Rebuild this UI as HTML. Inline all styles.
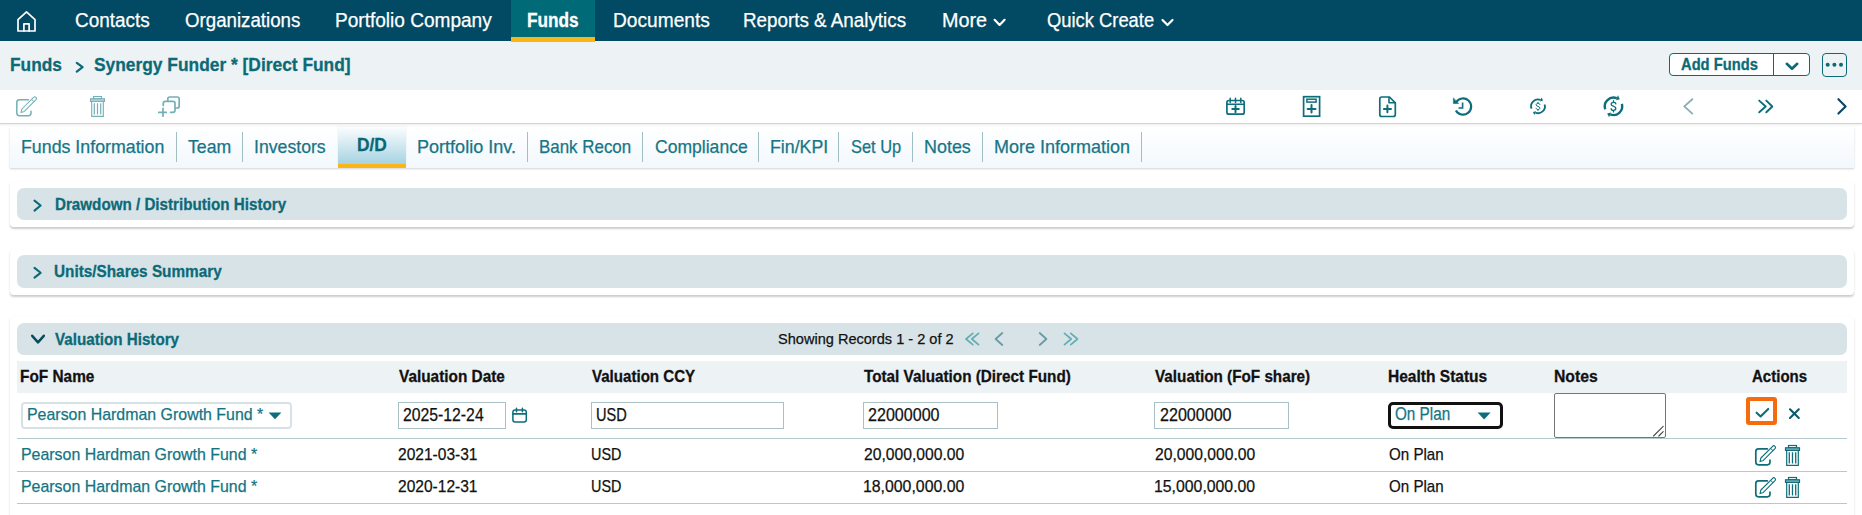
<!DOCTYPE html>
<html><head><meta charset="utf-8"><style>
html,body{margin:0;padding:0;width:1862px;height:515px;overflow:hidden;background:#fff;position:relative}
body{font-family:"Liberation Sans",sans-serif}
.a{position:absolute;box-sizing:border-box}
.t{position:absolute;white-space:nowrap;line-height:20px;transform-origin:0 0;font-family:"Liberation Sans",sans-serif}
svg{position:absolute;overflow:visible}
</style></head><body>
<!-- NAV -->
<div class="a" style="left:0;top:0;width:1862px;height:41px;background:#024a63"></div>
<div class="a" style="left:511px;top:0;width:84px;height:41px;background:#006b77"></div>
<div class="a" style="left:511px;top:37px;width:84px;height:5px;background:#fbb514"></div>
<svg style="left:0;top:0" width="1862" height="41" viewBox="0 0 1862 41">
 <g fill="none" stroke="#fff" stroke-width="1.7" stroke-linejoin="round" stroke-linecap="round">
  <path d="M18,19.6 L26.5,11.8 L35,19.6 V31 H18 Z"/>
  <path d="M23.9,31 V23.9 H29.1 V31"/>
 </g>
 <g fill="none" stroke="#fff" stroke-width="2.2" stroke-linecap="round" stroke-linejoin="round">
  <path d="M994.6,19.8 L999.6,24.9 L1004.6,19.8"/>
  <path d="M1162.5,20 L1167.5,25 L1172.5,20"/>
 </g>
</svg>
<!-- BREADCRUMB -->
<div class="a" style="left:0;top:41px;width:1862px;height:49px;background:#edf2f5"></div>
<div class="a" style="left:511px;top:41px;width:84px;height:1px;background:#fbb514"></div>
<svg style="left:0;top:41px" width="1862" height="49" viewBox="0 41 1862 49">
 <path d="M76.8,62.8 L82.6,67.2 L76.8,71.6" fill="none" stroke="#0c6a77" stroke-width="2.2" stroke-linecap="round" stroke-linejoin="round"/>
</svg>
<div class="a" style="left:1669px;top:53px;width:141px;height:23px;border:1px solid #0c6a77;border-radius:4px;background:#fff"></div>
<div class="a" style="left:1773px;top:53px;width:1px;height:23px;background:#0c6a77"></div>
<div class="a" style="left:1822px;top:53px;width:25px;height:24px;border:1.3px solid #0c6a77;border-radius:4px"></div>
<svg style="left:1660px;top:45px" width="200" height="40" viewBox="1660 45 200 40">
 <path d="M1786.8,63.8 L1792,68.8 L1797.2,63.8" fill="none" stroke="#0c6a77" stroke-width="2.6" stroke-linecap="round" stroke-linejoin="round"/>
 <circle cx="1827.7" cy="64.8" r="2" fill="#0c6a77"/>
 <circle cx="1834.4" cy="64.8" r="2" fill="#0c6a77"/>
 <circle cx="1841" cy="64.8" r="2" fill="#0c6a77"/>
</svg>
<!-- TOOLBAR -->
<div class="a" style="left:0;top:123px;width:1862px;height:1px;background:#d2d5d7;box-shadow:0 1px 2px rgba(0,0,0,0.12)"></div>
<svg style="left:0;top:90px" width="1862" height="33" viewBox="0 90 1862 33">
 <!-- edit disabled -->
 <g fill="none" stroke="#74afb5" stroke-linecap="round" stroke-linejoin="round">
  <path d="M28.4,99.8 H19.5 A2.7,2.7 0 0 0 16.8,102.5 V113.1 A2.7,2.7 0 0 0 19.5,115.8 H28.3 A2.7,2.7 0 0 0 31,113.1 V111.2" stroke-width="1.5"/>
  <path d="M21,112.6 L21.9,109 L33.6,97.3 A1.6,1.6 0 0 1 36,99.7 L24.3,111.4 Z" stroke-width="1.05"/>
  <path d="M31.6,99.3 L34,101.7" stroke-width="1"/>
 </g>
 <!-- trash disabled -->
 <g fill="none" stroke="#74afb5" stroke-width="1.1">
  <rect x="93.5" y="96.5" width="8" height="2.2"/>
  <rect x="90.5" y="98.8" width="14" height="2.6" fill="#b9d6d9"/>
  <path d="M91.7,101.4 V116.4 H103.3 V101.4"/>
  <path d="M94.3,103.2 V114.6 M97.5,103.2 V114.6 M100.7,103.2 V114.6" stroke-width="1.2"/>
 </g>
 <!-- copy plus disabled -->
 <g fill="none" stroke="#74afb5" stroke-width="1.7" stroke-linecap="round">
  <path d="M167.8,101 V99 A2,2 0 0 1 169.8,97 H177.2 A2,2 0 0 1 179.2,99 V106 A2,2 0 0 1 177.2,108 H175.6"/>
  <path d="M163.3,105.4 V103.3 A2,2 0 0 1 165.3,101.3 H173 A2,2 0 0 1 175,103.3 V110.3 A2,2 0 0 1 173,112.3 H170.6"/>
  <path d="M158.8,112.4 H166.3 M163,108.4 V116.2"/>
 </g>
 <!-- right icons -->
 <g fill="none" stroke="#0d6e7b" stroke-linecap="round" stroke-linejoin="round">
  <!-- calendar plus -->
  <rect x="1226.9" y="100.5" width="17.3" height="13.7" rx="2" stroke-width="1.7"/>
  <path d="M1226.9,104.3 H1244.2" stroke-width="1.6"/>
  <path d="M1230.2,98.2 V102.5 M1235.5,98.2 V102.5 M1240.8,98.2 V102.5" stroke-width="1.5"/>
  <path d="M1232.3,109 H1238.8 M1235.5,106 V112.3" stroke-width="2"/>
  <!-- doc header plus -->
  <rect x="1303.6" y="96.7" width="16" height="19.5" stroke-width="1.7" stroke-linejoin="miter"/>
  <rect x="1306.9" y="99.2" width="9.2" height="2.9" stroke-width="1.5" stroke-linejoin="miter"/>
  <path d="M1307.6,109 H1315.5 M1311.5,105 V112.6" stroke-width="2"/>
  <!-- file plus -->
  <path d="M1389.5,97 H1381.8 A2,2 0 0 0 1379.8,99 V114.5 A2,2 0 0 0 1381.8,116.5 H1393.3 A2,2 0 0 0 1395.3,114.5 V102.8 Z" stroke-width="1.7"/>
  <path d="M1389,97.5 V102.7 H1395" stroke-width="1.6"/>
  <path d="M1383.9,109 H1391 M1387.4,105.5 V112.3" stroke-width="2"/>
  <!-- history -->
  <path d="M1456.2,102.2 A8.1,8.1 0 1 1 1455.9,110.4" stroke-width="2.2" stroke-linecap="butt"/>
  <path d="M1453.4,98.2 V103.5 H1458.4 Z" fill="#0d6e7b" stroke-width="0.6"/>
  <path d="M1462.6,102.4 V108 H1458.5" stroke-width="1.6" stroke-linecap="butt" stroke-linejoin="miter"/>
 </g>
 <path d="M1531.52,108.66 A6.9,6.9 0 0 1 1540.58,99.90" fill="none" stroke="#0d6e7b" stroke-width="1.8"/>
 <path d="M1541.53,97.57 L1543.11,100.60 L1539.96,101.46 Z" fill="#0d6e7b"/>
 <path d="M1544.63,104.40 A6.9,6.9 0 0 1 1535.42,112.70" fill="none" stroke="#0d6e7b" stroke-width="1.8"/>
 <path d="M1534.47,115.03 L1532.89,112.00 L1536.04,111.14 Z" fill="#0d6e7b"/>
 <path d="M1539.90,104.54 C1539.90,103.61 1538.84,103.30 1538.00,103.30 C1536.95,103.30 1536.10,103.92 1536.10,104.97 C1536.10,106.40 1539.90,106.28 1539.90,107.95 C1539.90,109.00 1539.05,109.50 1538.00,109.50 C1537.16,109.50 1536.10,109.19 1536.10,108.26 M1538.00,102.30 V103.30 M1538.00,109.50 V110.50" fill="none" stroke="#0d6e7b" stroke-width="1.0" stroke-linecap="round"/>
 <path d="M1605.32,109.28 A8.7,8.7 0 0 1 1616.76,98.23" fill="none" stroke="#0d6e7b" stroke-width="2.4"/>
 <path d="M1617.93,95.34 L1619.84,99.15 L1615.98,100.16 Z" fill="#0d6e7b"/>
 <path d="M1621.86,103.90 A8.7,8.7 0 0 1 1610.24,114.37" fill="none" stroke="#0d6e7b" stroke-width="2.4"/>
 <path d="M1609.07,117.26 L1607.16,113.45 L1611.02,112.44 Z" fill="#0d6e7b"/>
 <path d="M1615.80,103.90 C1615.80,102.70 1614.51,102.30 1613.50,102.30 C1612.23,102.30 1611.20,103.10 1611.20,104.46 C1611.20,106.30 1615.80,106.14 1615.80,108.30 C1615.80,109.66 1614.77,110.30 1613.50,110.30 C1612.49,110.30 1611.20,109.90 1611.20,108.70 M1613.50,100.70 V102.30 M1613.50,110.30 V111.90" fill="none" stroke="#0d6e7b" stroke-width="1.35" stroke-linecap="round"/>
 <!-- nav arrows -->
 <path d="M1692.3,99.2 L1684.3,106.4 L1692.3,113.6" fill="none" stroke="#8caeb6" stroke-width="1.9" stroke-linecap="round" stroke-linejoin="round"/>
 <path d="M1759.2,100.6 L1765.7,106.5 L1759.2,112.3 M1766.3,100.6 L1772.3,106.5 L1766.3,112.3" fill="none" stroke="#0b6e7b" stroke-width="1.9" stroke-linecap="round" stroke-linejoin="round"/>
 <path d="M1838.4,99.2 L1845.6,106.4 L1838.4,113.6" fill="none" stroke="#0b4560" stroke-width="2.1" stroke-linecap="round" stroke-linejoin="round"/>
</svg>
<!-- TABS -->
<div class="a" style="left:10px;top:127px;width:1844px;height:41px;background:linear-gradient(#ffffff,#f2f8fd);box-shadow:0 1px 2px rgba(0,0,0,0.18)"></div>
<div class="a" style="left:338px;top:127px;width:68px;height:37px;background:linear-gradient(#fbfdfe,#a6d3e2);box-shadow:0 0 1px rgba(0,0,0,0.15)"></div>
<div class="a" style="left:338px;top:164px;width:68px;height:4px;background:#fbb514"></div>
<div class="a" style="left:176px;top:132px;width:1px;height:30px;background:#a2bec5"></div>
<div class="a" style="left:242px;top:132px;width:1px;height:30px;background:#a2bec5"></div>
<div class="a" style="left:527px;top:132px;width:1px;height:30px;background:#a2bec5"></div>
<div class="a" style="left:642px;top:132px;width:1px;height:30px;background:#a2bec5"></div>
<div class="a" style="left:758px;top:132px;width:1px;height:30px;background:#a2bec5"></div>
<div class="a" style="left:838px;top:132px;width:1px;height:30px;background:#a2bec5"></div>
<div class="a" style="left:912px;top:132px;width:1px;height:30px;background:#a2bec5"></div>
<div class="a" style="left:982px;top:132px;width:1px;height:30px;background:#a2bec5"></div>
<div class="a" style="left:1141px;top:132px;width:1px;height:30px;background:#a2bec5"></div>
<!-- CARDS -->
<div class="a" style="left:10px;top:182px;width:1844px;height:45px;background:#fff;border-radius:4px;box-shadow:0 1.5px 2px rgba(0,0,0,0.2)"></div>
<div class="a" style="left:17px;top:188px;width:1830px;height:32px;background:#d8e3e8;border-radius:7px"></div>
<div class="a" style="left:10px;top:250px;width:1844px;height:45px;background:#fff;border-radius:4px;box-shadow:0 1.5px 2px rgba(0,0,0,0.2)"></div>
<div class="a" style="left:17px;top:255px;width:1830px;height:33px;background:#d8e3e8;border-radius:7px"></div>
<div class="a" style="left:10px;top:317px;width:1844px;height:260px;background:#fff;border-radius:4px;box-shadow:0 1.5px 2px rgba(0,0,0,0.2)"></div>
<div class="a" style="left:17px;top:323px;width:1830px;height:32px;background:#d8e3e8;border-radius:7px"></div>
<svg style="left:0;top:180px" width="1862" height="180" viewBox="0 180 1862 180">
 <g fill="none" stroke-width="2.1" stroke-linecap="round" stroke-linejoin="round">
  <path d="M34.5,200.6 L40.6,205.5 L34.5,210.6" stroke="#0c6a77"/>
  <path d="M34.5,267.9 L40.6,272.8 L34.5,277.6" stroke="#0c6a77"/>
  <path d="M32.2,335.8 L38,342.4 L43.8,335.8" stroke="#0b4a5e" stroke-width="2.5"/>
 </g>
 <g fill="none" stroke-width="1.5" stroke-linecap="round" stroke-linejoin="round">
  <path d="M972.8,333.4 L966,339 L972.8,344.6 M978.5,333.4 L971.8,339 L978.5,344.6" stroke="#62adb2" stroke-width="1.7"/>
  <path d="M1002.3,333 L995.6,339 L1002.3,345" stroke="#6a9aa6" stroke-width="1.8"/>
  <path d="M1039.7,333 L1046.4,339 L1039.7,345" stroke="#6a9aa6" stroke-width="1.8"/>
  <path d="M1064.5,333.4 L1071.2,339 L1064.5,344.6 M1070.8,333.4 L1077.5,339 L1070.8,344.6" stroke="#62adb2" stroke-width="1.7"/>
 </g>
</svg>
<!-- TABLE -->
<div class="a" style="left:17px;top:361px;width:1830px;height:32px;background:#edf2f5"></div>
<div class="a" style="left:17px;top:438px;width:1830px;height:1px;background:#b4c9d0"></div>
<div class="a" style="left:17px;top:471px;width:1830px;height:1px;background:#b4c9d0"></div>
<div class="a" style="left:17px;top:503px;width:1830px;height:1px;background:#b4c9d0"></div>
<!-- inputs -->
<div class="a" style="left:21px;top:402px;width:271px;height:27px;border:2px solid #d6e2e6;border-radius:4px;background:#fff"></div>
<div class="a" style="left:398px;top:402px;width:108px;height:27px;border:1px solid #aac0c7;background:#fff"></div>
<div class="a" style="left:591px;top:402px;width:193px;height:27px;border:1px solid #aac0c7;background:#fff"></div>
<div class="a" style="left:863px;top:402px;width:135px;height:27px;border:1px solid #aac0c7;background:#fff"></div>
<div class="a" style="left:1154px;top:402px;width:135px;height:27px;border:1px solid #aac0c7;background:#fff"></div>
<div class="a" style="left:1388px;top:402px;width:115px;height:27px;border:3px solid #111;border-radius:5px;background:#fff"></div>
<div class="a" style="left:1554px;top:393px;width:112px;height:45px;border:1px solid #767676;border-radius:2px;background:#fff"></div>
<div class="a" style="left:1746px;top:397px;width:31px;height:28px;border:4px solid #f56b0e;border-radius:3px;background:#fff"></div>
<svg style="left:0;top:395px" width="1862" height="120" viewBox="0 395 1862 120">
 <path d="M268.6,412.6 H281.4 L275,419.3 Z" fill="#0d6e7b"/>
 <path d="M1477.6,412.6 H1490.6 L1484.1,419.4 Z" fill="#0d6e7b"/>
 <g fill="none" stroke="#0d6e7b" stroke-linecap="round" stroke-linejoin="round">
  <rect x="512.9" y="410" width="13.4" height="12" rx="2.2" stroke-width="1.5"/>
  <path d="M512.9,413.9 H526.3" stroke-width="1.6"/>
  <path d="M516.5,408.3 V411.8 M522.4,408.3 V411.8" stroke-width="1.5"/>
 </g>
 <path d="M1663.2,426.3 L1653.5,436 M1663.2,431.6 L1658.8,436" stroke="#4a4a4a" stroke-width="1.1" stroke-linecap="round"/>
 <path d="M1756.6,412.7 L1760.6,416.5 L1768.2,408.9" fill="none" stroke="#0d6e7b" stroke-width="2.1" stroke-linecap="round" stroke-linejoin="round"/>
 <path d="M1790,409.3 L1798.8,417.9 M1798.8,409.3 L1790,417.9" fill="none" stroke="#0b5a6b" stroke-width="2.1" stroke-linecap="round"/>
</svg>
<svg style="left:0;top:440px" width="1862" height="75" viewBox="0 440 1862 75">
<g transform="translate(1739,349)" fill="none" stroke="#0d6e7b" stroke-linecap="round" stroke-linejoin="round">
  <path d="M28.4,99.8 H19.5 A2.7,2.7 0 0 0 16.8,102.5 V113.1 A2.7,2.7 0 0 0 19.5,115.8 H28.3 A2.7,2.7 0 0 0 31,113.1 V111.2" stroke-width="1.7"/>
  <path d="M21,112.6 L21.9,109 L33.6,97.3 A1.6,1.6 0 0 1 36,99.7 L24.3,111.4 Z" stroke-width="1.1"/>
  <path d="M31.6,99.3 L34,101.7" stroke-width="1"/>
 </g><g transform="translate(1695,349)" fill="none" stroke="#0d6e7b" stroke-width="1.2">
  <rect x="93.5" y="96.5" width="8" height="2.2"/>
  <rect x="90.5" y="98.8" width="14" height="2.6" fill="#7fb3b9"/>
  <path d="M91.7,101.4 V116.4 H103.3 V101.4"/>
  <path d="M94.3,103.2 V114.6 M97.5,103.2 V114.6 M100.7,103.2 V114.6" stroke-width="1.3"/>
 </g><g transform="translate(1739,381)" fill="none" stroke="#0d6e7b" stroke-linecap="round" stroke-linejoin="round">
  <path d="M28.4,99.8 H19.5 A2.7,2.7 0 0 0 16.8,102.5 V113.1 A2.7,2.7 0 0 0 19.5,115.8 H28.3 A2.7,2.7 0 0 0 31,113.1 V111.2" stroke-width="1.7"/>
  <path d="M21,112.6 L21.9,109 L33.6,97.3 A1.6,1.6 0 0 1 36,99.7 L24.3,111.4 Z" stroke-width="1.1"/>
  <path d="M31.6,99.3 L34,101.7" stroke-width="1"/>
 </g><g transform="translate(1695,381)" fill="none" stroke="#0d6e7b" stroke-width="1.2">
  <rect x="93.5" y="96.5" width="8" height="2.2"/>
  <rect x="90.5" y="98.8" width="14" height="2.6" fill="#7fb3b9"/>
  <path d="M91.7,101.4 V116.4 H103.3 V101.4"/>
  <path d="M94.3,103.2 V114.6 M97.5,103.2 V114.6 M100.7,103.2 V114.6" stroke-width="1.3"/>
 </g></svg>

<div class="t" style="left:75.10px;top:10.00px;font-size:19.5px;font-weight:400;color:#fff;transform:scaleX(0.9715);-webkit-text-stroke:0.25px #fff;">Contacts</div><div class="t" style="left:185.00px;top:10.00px;font-size:19.5px;font-weight:400;color:#fff;transform:scaleX(0.9588);-webkit-text-stroke:0.25px #fff;">Organizations</div><div class="t" style="left:335.42px;top:10.00px;font-size:19.5px;font-weight:400;color:#fff;transform:scaleX(0.9771);-webkit-text-stroke:0.25px #fff;">Portfolio Company</div><div class="t" style="left:527.02px;top:10.00px;font-size:19.5px;font-weight:700;color:#fff;transform:scaleX(0.8830);-webkit-text-stroke:0.3px #fff;">Funds</div><div class="t" style="left:612.52px;top:10.00px;font-size:19.5px;font-weight:400;color:#fff;transform:scaleX(0.9819);-webkit-text-stroke:0.25px #fff;">Documents</div><div class="t" style="left:743.44px;top:10.00px;font-size:19.5px;font-weight:400;color:#fff;transform:scaleX(0.9646);-webkit-text-stroke:0.25px #fff;">Reports &amp; Analytics</div><div class="t" style="left:941.59px;top:10.00px;font-size:19.5px;font-weight:400;color:#fff;transform:scaleX(1.0145);-webkit-text-stroke:0.25px #fff;">More</div><div class="t" style="left:1047.30px;top:10.00px;font-size:19.5px;font-weight:400;color:#fff;transform:scaleX(0.9412);-webkit-text-stroke:0.25px #fff;">Quick Create</div><div class="t" style="left:9.59px;top:55.00px;font-size:19px;font-weight:700;color:#0c6a77;transform:scaleX(0.9112);-webkit-text-stroke:0.3px #0c6a77;">Funds</div><div class="t" style="left:94.00px;top:55.00px;font-size:19px;font-weight:700;color:#0c6a77;transform:scaleX(0.9138);-webkit-text-stroke:0.3px #0c6a77;">Synergy Funder * [Direct Fund]</div><div class="t" style="left:1681.30px;top:54.00px;font-size:16.5px;font-weight:700;color:#0c6a77;transform:scaleX(0.8921);-webkit-text-stroke:0.3px #0c6a77;">Add Funds</div><div class="t" style="left:21.14px;top:137.00px;font-size:18.5px;font-weight:400;color:#167586;transform:scaleX(0.9613);-webkit-text-stroke:0.25px #167586;">Funds Information</div><div class="t" style="left:188.00px;top:137.00px;font-size:18.5px;font-weight:400;color:#167586;transform:scaleX(0.9570);-webkit-text-stroke:0.25px #167586;">Team</div><div class="t" style="left:253.94px;top:137.00px;font-size:18.5px;font-weight:400;color:#167586;transform:scaleX(0.9552);-webkit-text-stroke:0.25px #167586;">Investors</div><div class="t" style="left:356.66px;top:135.00px;font-size:18.5px;font-weight:700;color:#0b6675;transform:scaleX(0.9377);-webkit-text-stroke:0.3px #0b6675;">D/D</div><div class="t" style="left:417.22px;top:137.00px;font-size:18.5px;font-weight:400;color:#167586;transform:scaleX(0.9757);-webkit-text-stroke:0.25px #167586;">Portfolio Inv.</div><div class="t" style="left:538.89px;top:137.00px;font-size:18.5px;font-weight:400;color:#167586;transform:scaleX(0.9146);-webkit-text-stroke:0.25px #167586;">Bank Recon</div><div class="t" style="left:654.60px;top:137.00px;font-size:18.5px;font-weight:400;color:#167586;transform:scaleX(0.9487);-webkit-text-stroke:0.25px #167586;">Compliance</div><div class="t" style="left:769.64px;top:137.00px;font-size:18.5px;font-weight:400;color:#167586;transform:scaleX(0.9587);-webkit-text-stroke:0.25px #167586;">Fin/KPI</div><div class="t" style="left:851.00px;top:137.00px;font-size:18.5px;font-weight:400;color:#167586;transform:scaleX(0.8886);-webkit-text-stroke:0.25px #167586;">Set Up</div><div class="t" style="left:924.23px;top:137.00px;font-size:18.5px;font-weight:400;color:#167586;transform:scaleX(0.9686);-webkit-text-stroke:0.25px #167586;">Notes</div><div class="t" style="left:993.63px;top:137.00px;font-size:18.5px;font-weight:400;color:#167586;transform:scaleX(0.9730);-webkit-text-stroke:0.25px #167586;">More Information</div><div class="t" style="left:54.91px;top:195.00px;font-size:17px;font-weight:700;color:#0c6a77;transform:scaleX(0.8930);-webkit-text-stroke:0.3px #0c6a77;">Drawdown / Distribution History</div><div class="t" style="left:54.40px;top:262.00px;font-size:17px;font-weight:700;color:#0c6a77;transform:scaleX(0.9010);-webkit-text-stroke:0.3px #0c6a77;">Units/Shares Summary</div><div class="t" style="left:55.30px;top:330.00px;font-size:17px;font-weight:700;color:#0c6a77;transform:scaleX(0.8931);-webkit-text-stroke:0.3px #0c6a77;">Valuation History</div><div class="t" style="left:777.70px;top:329.00px;font-size:15.5px;font-weight:400;color:#111;transform:scaleX(0.9391);-webkit-text-stroke:0.25px #111;">Showing Records 1 - 2 of 2</div><div class="t" style="left:20.49px;top:367.00px;font-size:17px;font-weight:700;color:#111;transform:scaleX(0.9056);-webkit-text-stroke:0.3px #111;">FoF Name</div><div class="t" style="left:398.50px;top:367.00px;font-size:17px;font-weight:700;color:#111;transform:scaleX(0.9041);-webkit-text-stroke:0.3px #111;">Valuation Date</div><div class="t" style="left:591.80px;top:367.00px;font-size:17px;font-weight:700;color:#111;transform:scaleX(0.8875);-webkit-text-stroke:0.3px #111;">Valuation CCY</div><div class="t" style="left:864.00px;top:367.00px;font-size:17px;font-weight:700;color:#111;transform:scaleX(0.8986);-webkit-text-stroke:0.3px #111;">Total Valuation (Direct Fund)</div><div class="t" style="left:1155.40px;top:367.00px;font-size:17px;font-weight:700;color:#111;transform:scaleX(0.8978);-webkit-text-stroke:0.3px #111;">Valuation (FoF share)</div><div class="t" style="left:1387.99px;top:367.00px;font-size:17px;font-weight:700;color:#111;transform:scaleX(0.9134);-webkit-text-stroke:0.3px #111;">Health Status</div><div class="t" style="left:1553.87px;top:367.00px;font-size:17px;font-weight:700;color:#111;transform:scaleX(0.9262);-webkit-text-stroke:0.3px #111;">Notes</div><div class="t" style="left:1751.90px;top:367.00px;font-size:17px;font-weight:700;color:#111;transform:scaleX(0.8839);-webkit-text-stroke:0.3px #111;">Actions</div><div class="t" style="left:27.26px;top:405.00px;font-size:17px;font-weight:400;color:#137584;transform:scaleX(0.9365);-webkit-text-stroke:0.25px #137584;">Pearson Hardman Growth Fund *</div><div class="t" style="left:403.40px;top:405.00px;font-size:17.5px;font-weight:400;color:#111;transform:scaleX(0.9011);-webkit-text-stroke:0.25px #111;">2025-12-24</div><div class="t" style="left:596.17px;top:405.00px;font-size:17.5px;font-weight:400;color:#111;transform:scaleX(0.8326);-webkit-text-stroke:0.25px #111;">USD</div><div class="t" style="left:868.40px;top:405.00px;font-size:17.5px;font-weight:400;color:#111;transform:scaleX(0.9190);-webkit-text-stroke:0.25px #111;">22000000</div><div class="t" style="left:1160.00px;top:405.00px;font-size:17.5px;font-weight:400;color:#111;transform:scaleX(0.9190);-webkit-text-stroke:0.25px #111;">22000000</div><div class="t" style="left:1395.00px;top:404.00px;font-size:17.5px;font-weight:400;color:#137584;transform:scaleX(0.8720);-webkit-text-stroke:0.25px #137584;">On Plan</div><div class="t" style="left:21.06px;top:445.00px;font-size:17px;font-weight:400;color:#137584;transform:scaleX(0.9361);-webkit-text-stroke:0.25px #137584;">Pearson Hardman Growth Fund *</div><div class="t" style="left:398.40px;top:445.00px;font-size:17px;font-weight:400;color:#111;transform:scaleX(0.9144);-webkit-text-stroke:0.25px #111;">2021-03-31</div><div class="t" style="left:591.05px;top:445.00px;font-size:17px;font-weight:400;color:#111;transform:scaleX(0.8464);-webkit-text-stroke:0.25px #111;">USD</div><div class="t" style="left:863.70px;top:445.00px;font-size:17px;font-weight:400;color:#111;transform:scaleX(0.9228);-webkit-text-stroke:0.25px #111;">20,000,000.00</div><div class="t" style="left:1155.20px;top:445.00px;font-size:17px;font-weight:400;color:#111;transform:scaleX(0.9218);-webkit-text-stroke:0.25px #111;">20,000,000.00</div><div class="t" style="left:1389.20px;top:445.00px;font-size:17px;font-weight:400;color:#111;transform:scaleX(0.8906);-webkit-text-stroke:0.25px #111;">On Plan</div><div class="t" style="left:21.06px;top:477.00px;font-size:17px;font-weight:400;color:#137584;transform:scaleX(0.9361);-webkit-text-stroke:0.25px #137584;">Pearson Hardman Growth Fund *</div><div class="t" style="left:398.40px;top:477.00px;font-size:17px;font-weight:400;color:#111;transform:scaleX(0.9144);-webkit-text-stroke:0.25px #111;">2020-12-31</div><div class="t" style="left:591.05px;top:477.00px;font-size:17px;font-weight:400;color:#111;transform:scaleX(0.8464);-webkit-text-stroke:0.25px #111;">USD</div><div class="t" style="left:862.77px;top:477.00px;font-size:17px;font-weight:400;color:#111;transform:scaleX(0.9314);-webkit-text-stroke:0.25px #111;">18,000,000.00</div><div class="t" style="left:1154.27px;top:477.00px;font-size:17px;font-weight:400;color:#111;transform:scaleX(0.9304);-webkit-text-stroke:0.25px #111;">15,000,000.00</div><div class="t" style="left:1389.20px;top:477.00px;font-size:17px;font-weight:400;color:#111;transform:scaleX(0.8906);-webkit-text-stroke:0.25px #111;">On Plan</div>
</body></html>
